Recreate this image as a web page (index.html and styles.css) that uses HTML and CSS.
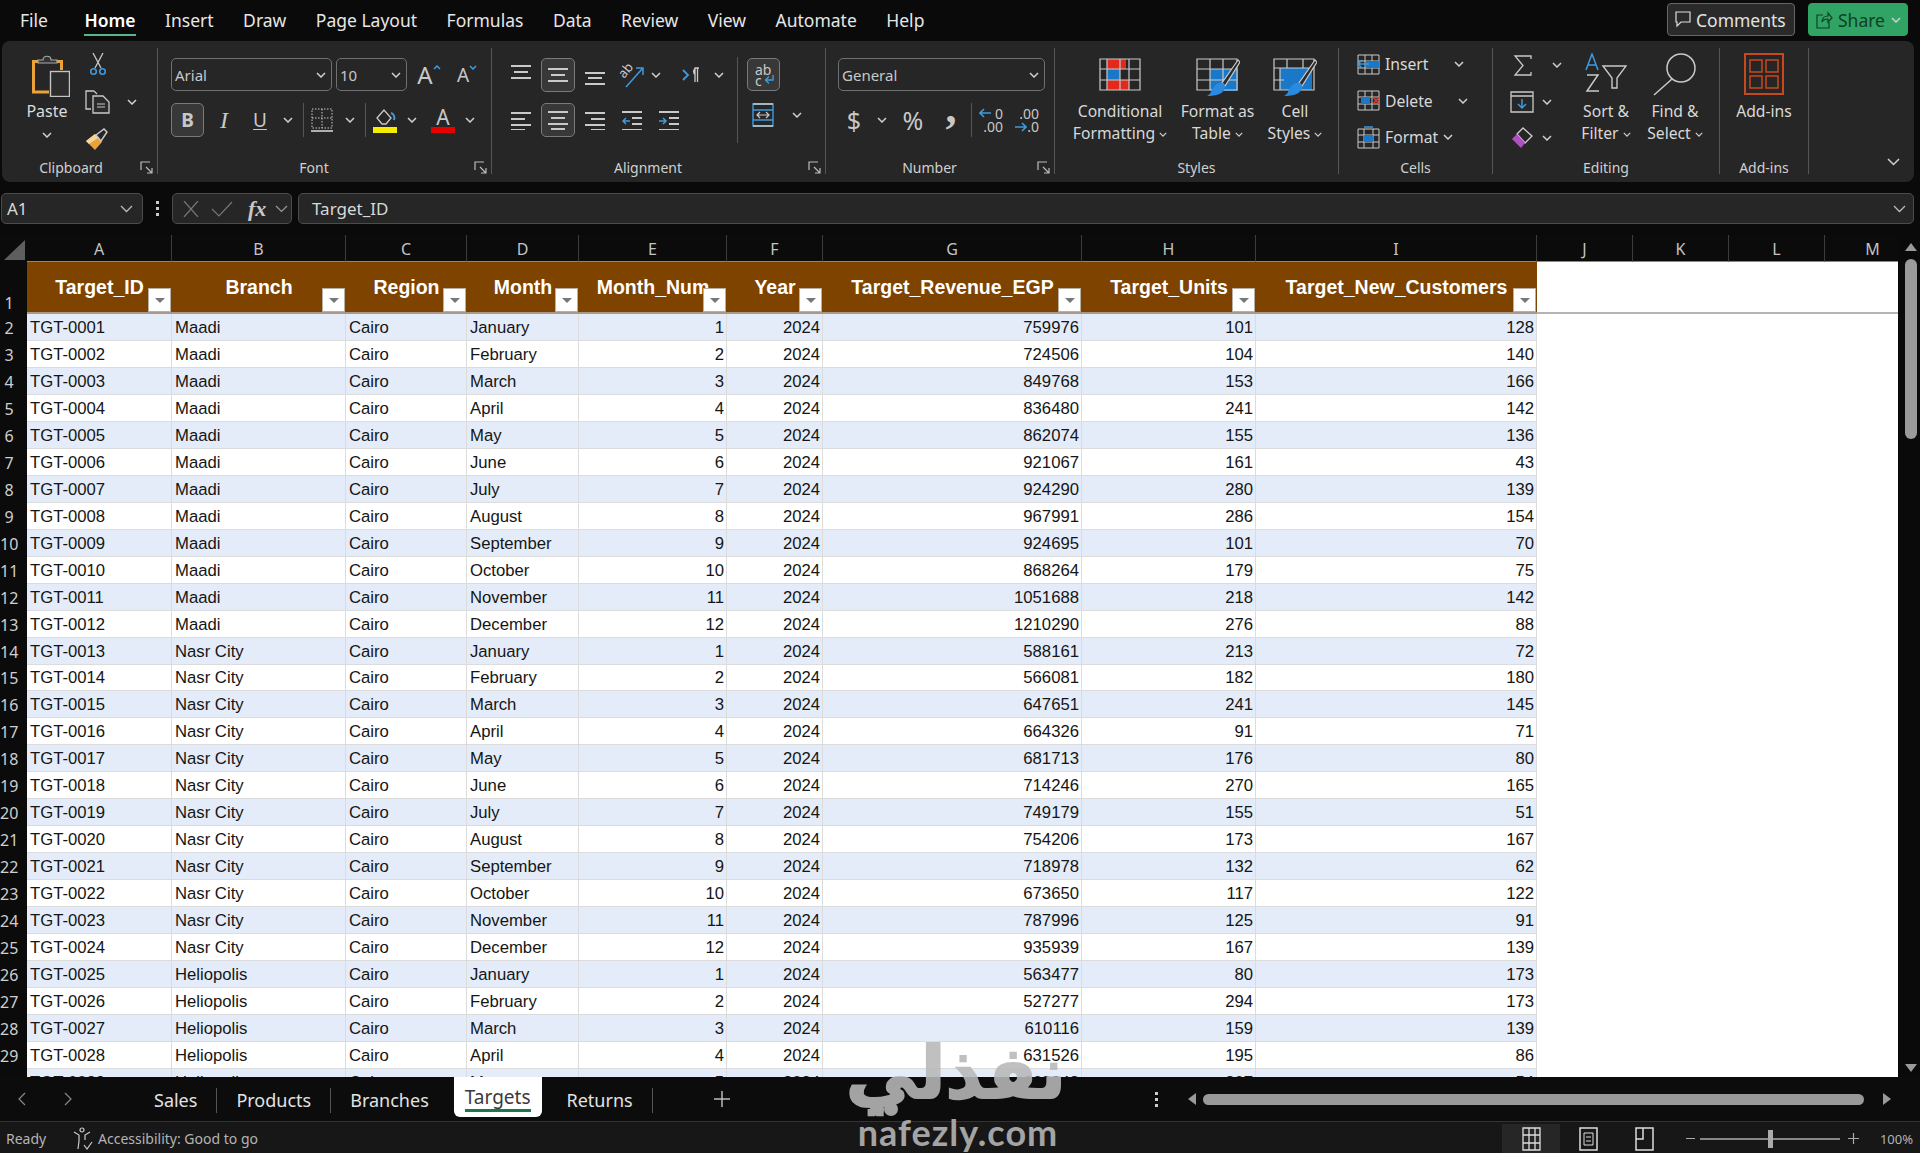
FILE: index.html
```html
<!DOCTYPE html>
<html lang="en">
<head>
    <meta charset="UTF-8">
    <meta name="viewport" content="width=device-width, initial-scale=1.0">
    <title>Targets - Excel</title>
    <link rel="stylesheet" href="styles.css">
</head>
<body>
    <svg class="defs" aria-hidden="true">
        <symbol id="chev" viewBox="0 0 10 6"><path d="M1 1l4 4 4-4" fill="none" stroke="#d0d0d0" stroke-width="1.5"/></symbol>
        <symbol id="launch" viewBox="0 0 13 13"><path d="M1 9V1h9M6 6l6 6M12 7v5H7" fill="none" stroke="#bcbcbc" stroke-width="1.2"/></symbol>
    </svg>

    <!-- menu bar -->
    <header class="topbar">
        <nav class="menu">
            <span class="file">File</span><span class="active">Home</span><span>Insert</span><span>Draw</span><span>Page Layout</span><span>Formulas</span><span>Data</span><span>Review</span><span>View</span><span>Automate</span><span>Help</span>
        </nav>
        <div class="top-actions">
            <button class="btn-comments">
                <svg width="16" height="17" viewBox="0 0 16 17"><path d="M1 1h14v10H6l-4 4v-4H1z" fill="none" stroke="#ddd" stroke-width="1.2"/></svg>
                Comments
            </button>
            <button class="btn-share">
                <svg width="17" height="18" viewBox="0 0 17 18"><path d="M7 4H1v13h12v-6M6 11c0-4 3-6 6-6V2l4 5-4 4V8c-3 0-5 1-6 3z" fill="none" stroke="#103f26" stroke-width="1.2"/></svg>
                Share
                <svg class="chev"><use href="#chev"/></svg>
            </button>
        </div>
    </header>

    <!-- ribbon -->
    <section class="ribbon">
        <div class="group g-clipboard">
            <div class="body clip-body">
                <div class="paste">
                    <svg class="paste-ic" width="38" height="43" viewBox="0 0 38 43"><path d="M8 7.5H1.500V38H17M23 7.500h6.500V16" fill="none" stroke="#eaa23a" stroke-width="3"/><path d="M6 9V6h5c0-5 8-5 8 0h6v3z" fill="#333" stroke="#aaa" stroke-width="1.200"/><rect x="18.500" y="17.500" width="19" height="25" fill="#2c2c2c" stroke="#c4c4c4" stroke-width="1.400"/></svg>
                    <span>Paste</span>
                    <svg class="chev"><use href="#chev"/></svg>
                </div>
                <div class="clip-tools">
                    <svg width="16" height="23" viewBox="0 0 16 23"><path d="M3 0l8 15M13 0L5 15" fill="none" stroke="#c9c9c9" stroke-width="1.300"/><circle cx="3.500" cy="18.500" r="2.800" fill="none" stroke="#3f9ade" stroke-width="1.600"/><circle cx="12.500" cy="18.500" r="2.800" fill="none" stroke="#3f9ade" stroke-width="1.600"/></svg>
                    <div class="copy-row">
                        <svg width="25" height="24" viewBox="0 0 25 24"><path d="M9 1H1v18h5M9 1l3 3" fill="none" stroke="#c9c9c9" stroke-width="1.300"/><path d="M8 6h10l6 6v11H8z" fill="#2b2b2b" stroke="#c9c9c9" stroke-width="1.300"/><path d="M12 14h8M12 17h8" stroke="#c9c9c9"/></svg>
                        <svg class="chev"><use href="#chev"/></svg>
                    </div>
                    <svg width="23" height="23" viewBox="0 0 23 23"><path d="M1 13l9-7 7 8-7 8z" fill="#eaa23a"/><path d="M1 13l9-7 3 4-9 6z" fill="#f3d79b"/><path d="M11 7l8-6 3 3-6 9z" fill="none" stroke="#c9c9c9" stroke-width="1.500"/></svg>
                </div>
            </div>
            <div class="foot"><span>Clipboard</span><svg class="launch"><use href="#launch"/></svg></div>
        </div>

        <div class="group g-font">
            <div class="body rows">
                <div class="font-row1">
                    <div class="select"><span>Arial</span><svg class="chev"><use href="#chev"/></svg></div>
                    <div class="select size"><span>10</span><svg class="chev"><use href="#chev"/></svg></div>
                    <div class="grow">A<svg width="8" height="5" viewBox="0 0 8 5"><path d="M1 4l3-3 3 3" fill="none" stroke="#3f9ade" stroke-width="1.500"/></svg></div>
                    <div class="grow small">A<svg width="8" height="5" viewBox="0 0 8 5"><path d="M1 1l3 3 3-3" fill="none" stroke="#3f9ade" stroke-width="1.500"/></svg></div>
                </div>
                <div class="font-row2">
                    <div class="tbtn on bold">B</div>
                    <div class="glyph ital">I</div>
                    <div class="glyph under">U</div>
                    <svg class="chev"><use href="#chev"/></svg>
                    <i class="vsep"></i>
                    <svg width="22" height="24" viewBox="0 0 22 24"><path d="M1 1h20v19H1zM11 1v19M1 10h20" fill="none" stroke="#c9c9c9" stroke-dasharray="1.500 1.500"/><path d="M0 23h22" stroke="#ddd" stroke-width="1.500"/></svg>
                    <svg class="chev"><use href="#chev"/></svg>
                    <i class="vsep"></i>
                    <svg width="24" height="26" viewBox="0 0 24 26"><path d="M4 11l7-8 7 8-5 6H9z" fill="none" stroke="#c9c9c9" stroke-width="1.300"/><path d="M18 6c3 1 4 4 3 7" fill="none" stroke="#3f9ade" stroke-width="2"/><rect y="20" width="24" height="6" fill="#f5ec00"/></svg>
                    <svg class="chev"><use href="#chev"/></svg>
                    <div class="color-a">A</div>
                    <svg class="chev"><use href="#chev"/></svg>
                </div>
            </div>
            <div class="foot"><span>Font</span><svg class="launch"><use href="#launch"/></svg></div>
        </div>

        <div class="group g-align">
            <div class="body align-body">
                <div class="rows align-left">
                    <div class="align-row1">
                        <svg class="lines" viewBox="0 0 20 20"><path d="M0 3h20M3 9h14M0 15h20" transform="translate(0 -2)"/></svg>
                        <div class="tbtn on"><svg class="lines" viewBox="0 0 20 20"><path d="M0 4h20M3 10h14M0 16h20"/></svg></div>
                        <svg class="lines" viewBox="0 0 20 20"><path d="M0 8h20M3 13h14M0 19h20"/></svg>
                        <svg class="orient" width="24" height="26" viewBox="0 0 24 26"><path d="M6 25L22 7M16 6h7v7" fill="none" stroke="#3f9ade" stroke-width="1.500"/><text class="ab" transform="translate(4 17) rotate(-50)">ab</text></svg>
                        <svg class="chev"><use href="#chev"/></svg>
                        <span></span>
                        <svg width="18" height="16" viewBox="0 0 18 16"><path d="M1 3l5 5-5 5" fill="none" stroke="#3f9ade" stroke-width="1.800"/><path d="M13 15V1h4M15.500 1v14" fill="none" stroke="#c9c9c9" stroke-width="1.300"/><path d="M13 1a4 4 0 0 0 0 7z" fill="#c9c9c9"/></svg>
                        <svg class="chev"><use href="#chev"/></svg>
                    </div>
                    <div class="align-row2">
                        <svg class="lines" viewBox="0 0 20 20"><path d="M0 3h20M0 9h14M0 15h20M0 20h14"/></svg>
                        <div class="tbtn on"><svg class="lines" viewBox="0 0 20 20"><path d="M0 2h20M3 8h14M0 14h20M3 19h14"/></svg></div>
                        <svg class="lines" viewBox="0 0 20 20"><path d="M0 3h20M6 9h14M0 15h20M6 20h14"/></svg>
                        <svg class="lines" viewBox="0 0 20 20"><path d="M0 2h20M10 8h10M10 14h10M0 20h20"/><path class="blue" d="M8 11H1M4 8l-3 3 3 3"/></svg>
                        <svg class="lines" viewBox="0 0 20 20"><path d="M0 2h20M10 8h10M10 14h10M0 20h20"/><path class="blue" d="M0 11h7M4 8l3 3-3 3"/></svg>
                    </div>
                </div>
                <i class="vsep tall"></i>
                <div class="rows align-right">
                    <div class="tbtn on wrap"><span>ab<br>c</span><svg width="11" height="10" viewBox="0 0 11 10"><path d="M9 1v5H2M5 2.500L1.500 6 5 9.500" fill="none" stroke="#3f9ade" stroke-width="1.400"/></svg></div>
                    <div class="merge-row">
                        <svg width="22" height="24" viewBox="0 0 22 24"><path d="M1 1h20v22H1zM1 7h20M1 17h20" fill="none" stroke="#3f9ade" stroke-width="1.400"/><path d="M1 1h20M1 23h20" stroke="#c9c9c9" stroke-width="1.400"/><path d="M5 12h12M8 9l-3 3 3 3M14 9l3 3-3 3" fill="none" stroke="#c9c9c9" stroke-width="1.200"/></svg>
                        <svg class="chev"><use href="#chev"/></svg>
                    </div>
                </div>
            </div>
            <div class="foot"><span>Alignment</span><svg class="launch"><use href="#launch"/></svg></div>
        </div>

        <div class="group g-number">
            <div class="body rows">
                <div class="select number"><span>General</span><svg class="chev"><use href="#chev"/></svg></div>
                <div class="number-row">
                    <div class="glyph big">$</div>
                    <svg class="chev"><use href="#chev"/></svg>
                    <div class="glyph big">%</div>
                    <div class="glyph comma">,</div>
                    <i class="vsep"></i>
                    <div class="decimals"><svg width="12" height="10" viewBox="0 0 12 10"><path d="M12 5H1M5 1L1 5l4 4" fill="none" stroke="#3f9ade" stroke-width="1.600"/></svg><span class="d1">0</span><span class="d2">.00</span></div>
                    <div class="decimals"><span class="d1">.00</span><svg width="12" height="10" viewBox="0 0 12 10"><path d="M0 5h11M7 1l4 4-4 4" fill="none" stroke="#3f9ade" stroke-width="1.600"/></svg><span class="d2">.0</span></div>
                </div>
            </div>
            <div class="foot"><span>Number</span><svg class="launch"><use href="#launch"/></svg></div>
        </div>

        <div class="group g-styles">
            <div class="body bigs">
                <div class="big-btn w-cond">
                    <div class="big-ic"><svg width="42" height="33" viewBox="0 0 42 33"><path d="M8 1h19v10H8zM8 22h22v10H8z" fill="#e3281c"/><rect x="8" y="11" width="13" height="11" fill="#1a78c8"/><path d="M1 1h40v31H1zM1 11h40M1 22h40M8 1v31M21 1v31M30 1v31" fill="none" stroke="#c9c9c9" stroke-width="1.200"/></svg></div>
                    <div class="big-label">Conditional<br>Formatting <svg class="chev"><use href="#chev"/></svg></div>
                </div>
                <div class="big-btn w-table">
                    <div class="big-ic"><svg width="44" height="40" viewBox="0 0 44 40"><rect x="14" y="11" width="28" height="22" fill="#1a78c8"/><path d="M1 1h40v31H1zM1 11h40M1 22h40M14 1v31M27 1v31" fill="none" stroke="#c9c9c9" stroke-width="1.200"/><path d="M42 2L26 25l3 3L44 4z" fill="#2b2b2b" stroke="#c9c9c9" stroke-width="1.200"/><path d="M24 25c3-1 6 2 5 5-2 6-8 8-18 8 4-2 4-5 6-8 2-3 4-5 7-5z" fill="#2a8adf"/></svg></div>
                    <div class="big-label">Format as<br>Table <svg class="chev"><use href="#chev"/></svg></div>
                </div>
                <div class="big-btn w-cell">
                    <div class="big-ic"><svg width="44" height="40" viewBox="0 0 44 40"><rect x="7" y="10" width="32" height="22" fill="#1a78c8"/><path d="M1 1h40v31H1zM1 10h40M1 22h10M7 10v22M30 1v9M14 1v9" fill="none" stroke="#c9c9c9" stroke-width="1.200"/><path d="M42 2L26 25l3 3L44 4z" fill="#2b2b2b" stroke="#c9c9c9" stroke-width="1.200"/><path d="M24 25c3-1 6 2 5 5-2 6-8 8-18 8 4-2 4-5 6-8 2-3 4-5 7-5z" fill="#2a8adf"/></svg></div>
                    <div class="big-label">Cell<br>Styles <svg class="chev"><use href="#chev"/></svg></div>
                </div>
            </div>
            <div class="foot plain"><span>Styles</span></div>
        </div>

        <div class="group g-cells">
            <div class="body stack">
                <div class="cell-row">
                    <svg width="23" height="21" viewBox="0 0 23 21"><path d="M1 1h21v19H1zM1 7h21M1 14h21M8 1v19M15 1v19" fill="none" stroke="#c9c9c9"/><rect x="9" y="7" width="13" height="7" fill="#1a78c8"/><path d="M12 10H1M5 6l-4 4 4 4" fill="none" stroke="#3f9ade" stroke-width="1.600"/></svg>
                    <span>Insert</span><svg class="chev"><use href="#chev"/></svg>
                </div>
                <div class="cell-row">
                    <svg width="23" height="21" viewBox="0 0 23 21"><path d="M1 1h21v19H1zM1 7h21M1 14h21M8 1v19M15 1v19" fill="none" stroke="#c9c9c9"/><rect x="4" y="7" width="9" height="7" fill="#1a78c8"/><path d="M16 7l6 7M22 7l-6 7" stroke="#e3382c" stroke-width="1.600"/></svg>
                    <span>Delete</span><svg class="chev"><use href="#chev"/></svg>
                </div>
                <div class="cell-row tight">
                    <svg width="23" height="23" viewBox="0 0 23 23"><path d="M1 3h21v19H1zM1 9h21M1 16h21M7 3v19M16 3v19" fill="none" stroke="#c9c9c9"/><rect x="7" y="9" width="9" height="7" fill="#1a78c8"/><path d="M7 1h9" stroke="#3f9ade" stroke-width="1.500"/></svg>
                    <span>Format</span><svg class="chev"><use href="#chev"/></svg>
                </div>
            </div>
            <div class="foot plain"><span>Cells</span></div>
        </div>

        <div class="group g-editing">
            <div class="body edit-body">
                <div class="stack edit-tools">
                    <div class="edit-row sum">
                        <svg width="20" height="21" viewBox="0 0 20 21"><path d="M18 4V1H2l8 9.500L2 20h16v-3" fill="none" stroke="#c9c9c9" stroke-width="1.300"/></svg>
                        <svg class="chev"><use href="#chev"/></svg>
                    </div>
                    <div class="edit-row">
                        <svg width="24" height="22" viewBox="0 0 24 22"><path d="M1 1h22v20H1zM1 5h22" fill="none" stroke="#c9c9c9" stroke-width="1.300"/><path d="M12 8v9M8 13l4 4 4-4" fill="none" stroke="#3f9ade" stroke-width="1.500"/></svg>
                        <svg class="chev"><use href="#chev"/></svg>
                    </div>
                    <div class="edit-row">
                        <svg width="24" height="22" viewBox="0 0 24 22"><path d="M13 1l9 8-7 7-8-9z" fill="none" stroke="#d0d0d0" stroke-width="1.300"/><path d="M7 7l8 9-4 5-9-9z" fill="#b04fc4"/></svg>
                        <svg class="chev"><use href="#chev"/></svg>
                    </div>
                </div>
                <div class="big-btn w-sort">
                    <div class="big-ic"><svg width="42" height="40" viewBox="0 0 42 40"><path d="M1 17L7 1l6 16M3 12h8" fill="none" stroke="#3f9ade" stroke-width="1.500"/><path d="M2 22h11L2 38h12" fill="none" stroke="#c9c9c9" stroke-width="1.500"/><path d="M18 13h23l-9 12v10h-5V25z" fill="none" stroke="#c9c9c9" stroke-width="1.400"/></svg></div>
                    <div class="big-label">Sort &amp;<br>Filter <svg class="chev"><use href="#chev"/></svg></div>
                </div>
                <div class="big-btn w-find">
                    <div class="big-ic"><svg width="44" height="43" viewBox="0 0 44 43"><circle cx="28" cy="15" r="14" fill="none" stroke="#c9c9c9" stroke-width="1.500"/><path d="M19 26L1 42" stroke="#c9c9c9" stroke-width="1.500"/></svg></div>
                    <div class="big-label">Find &amp;<br>Select <svg class="chev"><use href="#chev"/></svg></div>
                </div>
            </div>
            <div class="foot plain"><span>Editing</span></div>
        </div>

        <div class="group g-addins">
            <div class="body bigs">
                <div class="big-btn w-add">
                    <div class="big-ic"><svg width="40" height="42" viewBox="0 0 40 42"><rect x="1" y="1" width="38" height="40" fill="none" stroke="#c8481e" stroke-width="2"/><path d="M6 7h12v12H6zM22 7h12v12H22zM6 23h12v12H6zM22 23h12v12H22z" fill="none" stroke="#c8481e" stroke-width="1.500"/></svg></div>
                    <div class="big-label">Add-ins</div>
                </div>
            </div>
            <div class="foot plain"><span>Add-ins</span></div>
        </div>

        <div class="collapse"><svg width="13" height="8" viewBox="0 0 13 8"><path d="M1 1l5.500 5.500L12 1" fill="none" stroke="#d0d0d0" stroke-width="1.500"/></svg></div>
    </section>

    <!-- formula bar -->
    <section class="formula">
        <div class="namebox"><span>A1</span><svg width="13" height="8" viewBox="0 0 13 8"><path d="M1 1l5.500 5.500L12 1" fill="none" stroke="#bbb" stroke-width="1.300"/></svg></div>
        <div class="fdots"><i></i><i></i><i></i></div>
        <div class="fbtns">
            <svg width="18" height="16" viewBox="0 0 18 16"><path d="M2 0l14 16M16 0L2 16" stroke="#777" stroke-width="1.200"/></svg>
            <svg width="22" height="16" viewBox="0 0 22 16"><path d="M1 8l7 7L21 1" fill="none" stroke="#777" stroke-width="1.200"/></svg>
            <span class="fx">fx</span>
            <svg width="13" height="8" viewBox="0 0 13 8"><path d="M1 1l5.500 5.500L12 1" fill="none" stroke="#999" stroke-width="1.200"/></svg>
        </div>
        <div class="finput"><span>Target_ID</span><svg width="13" height="8" viewBox="0 0 13 8"><path d="M1 1l5.500 5.500L12 1" fill="none" stroke="#bbb" stroke-width="1.300"/></svg></div>
    </section>

    <!-- sheet -->
    <main class="sheet">
        <div class="grid-wrap">
            <table class="grid">
                <colgroup>
                    <col class="c-row"><col class="c-a"><col class="c-b"><col class="c-c"><col class="c-d"><col class="c-e"><col class="c-f"><col class="c-g"><col class="c-h"><col class="c-i"><col class="c-x"><col class="c-x"><col class="c-x"><col class="c-x">
                </colgroup>
                <tr class="col-heads">
                    <th class="corner"><i></i></th><th>A</th><th>B</th><th>C</th><th>D</th><th>E</th><th>F</th><th>G</th><th>H</th><th>I</th><th>J</th><th>K</th><th>L</th><th>M</th>
                </tr>
                <tr class="head">
                    <th class="rn first">1</th>
                    <th>Target_ID<b></b></th><th>Branch<b></b></th><th>Region<b></b></th><th>Month<b></b></th><th>Month_Num<b></b></th><th>Year<b></b></th><th>Target_Revenue_EGP<b></b></th><th>Target_Units<b></b></th><th>Target_New_Customers<b></b></th>
                    <td class="rest-top" colspan="4"></td>
                </tr>
                <tr><th class="rn">2</th><td>TGT-0001</td><td>Maadi</td><td>Cairo</td><td>January</td><td class="n">1</td><td class="n">2024</td><td class="n">759976</td><td class="n">101</td><td class="n">128</td><td class="rest" colspan="4" rowspan="29"></td></tr>
                <tr><th class="rn">3</th><td>TGT-0002</td><td>Maadi</td><td>Cairo</td><td>February</td><td class="n">2</td><td class="n">2024</td><td class="n">724506</td><td class="n">104</td><td class="n">140</td></tr>
                <tr><th class="rn">4</th><td>TGT-0003</td><td>Maadi</td><td>Cairo</td><td>March</td><td class="n">3</td><td class="n">2024</td><td class="n">849768</td><td class="n">153</td><td class="n">166</td></tr>
                <tr><th class="rn">5</th><td>TGT-0004</td><td>Maadi</td><td>Cairo</td><td>April</td><td class="n">4</td><td class="n">2024</td><td class="n">836480</td><td class="n">241</td><td class="n">142</td></tr>
                <tr><th class="rn">6</th><td>TGT-0005</td><td>Maadi</td><td>Cairo</td><td>May</td><td class="n">5</td><td class="n">2024</td><td class="n">862074</td><td class="n">155</td><td class="n">136</td></tr>
                <tr><th class="rn">7</th><td>TGT-0006</td><td>Maadi</td><td>Cairo</td><td>June</td><td class="n">6</td><td class="n">2024</td><td class="n">921067</td><td class="n">161</td><td class="n">43</td></tr>
                <tr><th class="rn">8</th><td>TGT-0007</td><td>Maadi</td><td>Cairo</td><td>July</td><td class="n">7</td><td class="n">2024</td><td class="n">924290</td><td class="n">280</td><td class="n">139</td></tr>
                <tr><th class="rn">9</th><td>TGT-0008</td><td>Maadi</td><td>Cairo</td><td>August</td><td class="n">8</td><td class="n">2024</td><td class="n">967991</td><td class="n">286</td><td class="n">154</td></tr>
                <tr><th class="rn">10</th><td>TGT-0009</td><td>Maadi</td><td>Cairo</td><td>September</td><td class="n">9</td><td class="n">2024</td><td class="n">924695</td><td class="n">101</td><td class="n">70</td></tr>
                <tr><th class="rn">11</th><td>TGT-0010</td><td>Maadi</td><td>Cairo</td><td>October</td><td class="n">10</td><td class="n">2024</td><td class="n">868264</td><td class="n">179</td><td class="n">75</td></tr>
                <tr><th class="rn">12</th><td>TGT-0011</td><td>Maadi</td><td>Cairo</td><td>November</td><td class="n">11</td><td class="n">2024</td><td class="n">1051688</td><td class="n">218</td><td class="n">142</td></tr>
                <tr><th class="rn">13</th><td>TGT-0012</td><td>Maadi</td><td>Cairo</td><td>December</td><td class="n">12</td><td class="n">2024</td><td class="n">1210290</td><td class="n">276</td><td class="n">88</td></tr>
                <tr><th class="rn">14</th><td>TGT-0013</td><td>Nasr City</td><td>Cairo</td><td>January</td><td class="n">1</td><td class="n">2024</td><td class="n">588161</td><td class="n">213</td><td class="n">72</td></tr>
                <tr><th class="rn">15</th><td>TGT-0014</td><td>Nasr City</td><td>Cairo</td><td>February</td><td class="n">2</td><td class="n">2024</td><td class="n">566081</td><td class="n">182</td><td class="n">180</td></tr>
                <tr><th class="rn">16</th><td>TGT-0015</td><td>Nasr City</td><td>Cairo</td><td>March</td><td class="n">3</td><td class="n">2024</td><td class="n">647651</td><td class="n">241</td><td class="n">145</td></tr>
                <tr><th class="rn">17</th><td>TGT-0016</td><td>Nasr City</td><td>Cairo</td><td>April</td><td class="n">4</td><td class="n">2024</td><td class="n">664326</td><td class="n">91</td><td class="n">71</td></tr>
                <tr><th class="rn">18</th><td>TGT-0017</td><td>Nasr City</td><td>Cairo</td><td>May</td><td class="n">5</td><td class="n">2024</td><td class="n">681713</td><td class="n">176</td><td class="n">80</td></tr>
                <tr><th class="rn">19</th><td>TGT-0018</td><td>Nasr City</td><td>Cairo</td><td>June</td><td class="n">6</td><td class="n">2024</td><td class="n">714246</td><td class="n">270</td><td class="n">165</td></tr>
                <tr><th class="rn">20</th><td>TGT-0019</td><td>Nasr City</td><td>Cairo</td><td>July</td><td class="n">7</td><td class="n">2024</td><td class="n">749179</td><td class="n">155</td><td class="n">51</td></tr>
                <tr><th class="rn">21</th><td>TGT-0020</td><td>Nasr City</td><td>Cairo</td><td>August</td><td class="n">8</td><td class="n">2024</td><td class="n">754206</td><td class="n">173</td><td class="n">167</td></tr>
                <tr><th class="rn">22</th><td>TGT-0021</td><td>Nasr City</td><td>Cairo</td><td>September</td><td class="n">9</td><td class="n">2024</td><td class="n">718978</td><td class="n">132</td><td class="n">62</td></tr>
                <tr><th class="rn">23</th><td>TGT-0022</td><td>Nasr City</td><td>Cairo</td><td>October</td><td class="n">10</td><td class="n">2024</td><td class="n">673650</td><td class="n">117</td><td class="n">122</td></tr>
                <tr><th class="rn">24</th><td>TGT-0023</td><td>Nasr City</td><td>Cairo</td><td>November</td><td class="n">11</td><td class="n">2024</td><td class="n">787996</td><td class="n">125</td><td class="n">91</td></tr>
                <tr><th class="rn">25</th><td>TGT-0024</td><td>Nasr City</td><td>Cairo</td><td>December</td><td class="n">12</td><td class="n">2024</td><td class="n">935939</td><td class="n">167</td><td class="n">139</td></tr>
                <tr><th class="rn">26</th><td>TGT-0025</td><td>Heliopolis</td><td>Cairo</td><td>January</td><td class="n">1</td><td class="n">2024</td><td class="n">563477</td><td class="n">80</td><td class="n">173</td></tr>
                <tr><th class="rn">27</th><td>TGT-0026</td><td>Heliopolis</td><td>Cairo</td><td>February</td><td class="n">2</td><td class="n">2024</td><td class="n">527277</td><td class="n">294</td><td class="n">173</td></tr>
                <tr><th class="rn">28</th><td>TGT-0027</td><td>Heliopolis</td><td>Cairo</td><td>March</td><td class="n">3</td><td class="n">2024</td><td class="n">610116</td><td class="n">159</td><td class="n">139</td></tr>
                <tr><th class="rn">29</th><td>TGT-0028</td><td>Heliopolis</td><td>Cairo</td><td>April</td><td class="n">4</td><td class="n">2024</td><td class="n">631526</td><td class="n">195</td><td class="n">86</td></tr>
                <tr><th class="rn">30</th><td>TGT-0029</td><td>Heliopolis</td><td>Cairo</td><td>May</td><td class="n">5</td><td class="n">2024</td><td class="n">668048</td><td class="n">207</td><td class="n">54</td></tr>
            </table>
        </div>
        <div class="vscroll">
            <i class="arrow up"></i>
            <div class="vthumb"></div>
            <i class="arrow down"></i>
        </div>
    </main>

    <!-- sheet tabs -->
    <section class="tabsbar">
        <div class="tab-nav">
            <svg width="8" height="14" viewBox="0 0 8 14"><path d="M7 1L1 7l6 6" fill="none" stroke="#888" stroke-width="1.200"/></svg>
            <svg width="8" height="14" viewBox="0 0 8 14"><path d="M1 1l6 6-6 6" fill="none" stroke="#888" stroke-width="1.200"/></svg>
        </div>
        <div class="tabs">
            <span class="tab">Sales</span>
            <span class="tab">Products</span>
            <span class="tab">Branches</span>
            <span class="tab current">Targets</span>
            <span class="tab">Returns</span>
        </div>
        <svg class="plus" width="16" height="16" viewBox="0 0 16 16"><path d="M8 0v16M0 8h16" stroke="#bbb" stroke-width="1.500"/></svg>
        <div class="tab-dots"><i></i><i></i><i></i></div>
        <div class="hscroll">
            <i class="arrow left"></i>
            <div class="hthumb"></div>
            <i class="arrow right"></i>
        </div>
    </section>

    <!-- status bar -->
    <footer class="status">
        <span class="ready">Ready</span>
        <svg class="acc" width="20" height="24" viewBox="0 0 20 24"><circle cx="9" cy="3" r="2" fill="none" stroke="#ccc" stroke-width="1.200"/><path d="M1 5l5 3v6l-1 8M17 5l-5 3v5M11 18l3 4 5-7" fill="none" stroke="#ccc" stroke-width="1.200"/></svg>
        <span class="acc-text">Accessibility: Good to go</span>
        <div class="views">
            <div class="view on"><svg width="19" height="24" viewBox="0 0 19 24"><path d="M1 1h17v22H1zM1 8h17M1 16h17M7 1v22M13 1v22" fill="none" stroke="#ddd" stroke-width="1.300"/></svg></div>
            <div class="view"><svg width="19" height="24" viewBox="0 0 19 24"><path d="M1 1h17v22H1z" fill="none" stroke="#ddd" stroke-width="1.500"/><path d="M5 6h9v12H5zM7 10h5M7 14h5" fill="none" stroke="#ddd"/></svg></div>
            <div class="view"><svg width="19" height="24" viewBox="0 0 19 24"><path d="M1 1h17v22H1zM8 1v11H1" fill="none" stroke="#ddd" stroke-width="1.500"/></svg></div>
        </div>
        <div class="zoom">
            <i class="z-minus"></i>
            <div class="z-track"><i></i></div>
            <svg width="11" height="11" viewBox="0 0 11 11"><path d="M5.500 0v11M0 5.500h11" stroke="#aaa" stroke-width="1.200"/></svg>
            <span>100%</span>
        </div>
    </footer>

    <!-- watermark -->
    <div class="watermark">
        <div class="wm-ar" lang="ar" dir="rtl">نفذلي</div>
        <div class="wm-dots"><i></i><i></i></div>
        <div class="wm-en">nafezly.com</div>
    </div>
</body>
</html>
```

FILE: styles.css
```css
* {
    box-sizing: border-box;
}
html, body {
    margin: 0;
    height: 100%;
}
body {
    position: relative;
    width: 1920px;
    height: 1153px;
    overflow: hidden;
    display: flex;
    flex-direction: column;
    background-color: #0a0a0a;
    color: #dcdcdc;
    font-family: "Noto Sans", "Open Sans", sans-serif;
    font-size: 15px;
}
svg {
    display: block;
    flex: none;
}
i {
    font-style: normal;
}
.defs {
    position: absolute;
    width: 0;
    height: 0;
}
.chev {
    width: 10px;
    height: 6px;
}
.launch {
    width: 13px;
    height: 13px;
    margin-right: 4px;
}

/* menu bar */
.topbar {
    height: 41px;
    flex: none;
    display: flex;
    justify-content: space-between;
}
.menu {
    display: flex;
    gap: 29.500px;
    padding-left: 20px;
    font-size: 17.500px;
    line-height: 41px;
    color: #e6e6e6;
}
.menu .file {
    margin-right: 7px;
}
.menu .active {
    position: relative;
    font-weight: 600;
    color: #fff;
}
.menu .active::after {
    content: "";
    position: absolute;
    left: 0;
    right: 0;
    bottom: 5px;
    height: 2px;
    background-color: #5bb58a;
}
.top-actions {
    display: flex;
    gap: 13px;
    padding: 3px 12px 0 0;
}
.top-actions button {
    height: 33px;
    display: flex;
    align-items: center;
    gap: 5px;
    border-radius: 4px;
    font: inherit;
    font-size: 17.500px;
}
.btn-comments {
    width: 128px;
    padding: 0 0 0 7px;
    background-color: #2a2a2a;
    border: 1px solid #666;
    color: #e2e2e2;
}
.btn-share {
    width: 100px;
    padding: 0 0 0 7px;
    background-color: #2fa464;
    border: 1px solid #2fa464;
    color: #103f26;
}
.btn-share .chev {
    margin-left: 1px;
}

/* ribbon */
.ribbon {
    height: 141px;
    flex: none;
    margin: 0 6px 0 2px;
    padding: 7px 0 8px;
    display: flex;
    background-color: #262626;
    border-radius: 8px;
}
.group {
    flex: none;
    height: 126px;
    display: flex;
    flex-direction: column;
    border-right: 1px solid #565656;
}
.g-clipboard { width: 156px; }
.g-font { width: 334px; }
.g-align { width: 334px; }
.g-number { width: 229px; }
.g-styles { width: 284px; }
.g-cells { width: 154px; }
.g-editing { width: 227px; }
.g-addins { width: 89px; }
.body {
    flex: 1;
    min-height: 0;
}
.foot {
    height: 12px;
    margin-top: -1px;
    margin-bottom: 1px;
    display: flex;
    align-items: center;
    font-size: 14px;
    color: #d0d0d0;
}
.foot span {
    flex: 1;
    text-align: center;
    padding-right: 4px;
}
.g-clipboard .foot span {
    padding-right: 0;
}
.foot.plain span {
    padding-right: 0;
}
.rows {
    display: flex;
    flex-direction: column;
    gap: 12px;
    padding-top: 10px;
}
.vsep {
    width: 1px;
    height: 34px;
    background-color: #565656;
    justify-self: center;
}
.vsep.tall {
    flex: none;
    height: 86px;
    margin-top: 9px;
}
.select {
    height: 33px;
    display: flex;
    align-items: center;
    justify-content: space-between;
    padding: 0 5px 0 3px;
    border: 1px solid #707070;
    border-radius: 5px;
    font-size: 15px;
    color: #c8c8c8;
}
.tbtn {
    width: 34px;
    height: 34px;
    display: flex;
    align-items: center;
    justify-content: center;
}
.tbtn.on {
    background-color: #383838;
    border: 1px solid #7a7a7a;
    border-radius: 5px;
}
.glyph {
    font-size: 20px;
    color: #c8c8c8;
}
.lines {
    width: 20px;
    height: 20px;
    fill: none;
    stroke: #c9c9c9;
    stroke-width: 2;
}
.lines .blue {
    stroke: #3f9ade;
    stroke-width: 1.500;
}

/* clipboard */
.clip-body {
    display: flex;
    padding-left: 20px;
}
.paste {
    width: 50px;
    padding-top: 6px;
    display: flex;
    flex-direction: column;
    align-items: center;
}
.paste-ic {
    margin-left: 8px;
}
.paste span {
    margin-top: 2px;
    line-height: 24px;
    font-size: 16px;
}
.paste .chev {
    margin-top: 9px;
}
.clip-tools {
    margin-left: 13px;
    padding-top: 5px;
    display: flex;
    flex-direction: column;
    gap: 14px;
}
.clip-tools > svg:first-child {
    margin-left: 5px;
}
.copy-row {
    display: flex;
    align-items: center;
    gap: 17px;
}

/* font */
.g-font .rows {
    padding-left: 13px;
}
.font-row1 {
    display: grid;
    grid-template-columns: 165px 76px 34px 42px;
    align-items: center;
}
.font-row1 .select {
    width: 161px;
}
.font-row1 .select.size {
    width: 71px;
}
.grow {
    position: relative;
    justify-self: center;
    font-size: 24px;
    line-height: 28px;
    color: #c8c8c8;
    padding-right: 8px;
}
.grow.small {
    font-size: 19px;
}
.grow svg {
    position: absolute;
    top: 4px;
    right: 0;
}
.font-row2 {
    display: grid;
    grid-template-columns: 33px 40px 32px 24px 6px 32px 24px 6px 34px 20px 42px 12px;
    align-items: center;
    justify-items: center;
}
.bold {
    width: 33px;
    font-weight: 700;
    font-size: 19px;
    color: #c8c8c8;
}
.ital {
    font-family: "Liberation Serif", serif;
    font-style: italic;
    font-size: 24px;
}
.under {
    text-decoration: underline;
    text-underline-offset: 2px;
    font-size: 19px;
}
.color-a {
    width: 24px;
    height: 26px;
    text-align: center;
    font-size: 21px;
    line-height: 21px;
    color: #c8c8c8;
    border-bottom: 6px solid #e60000;
}

/* alignment */
.align-body {
    display: flex;
}
.align-left {
    width: 245px;
    padding-left: 9px;
}
.align-row1 {
    display: grid;
    grid-template-columns: 40px 34px 40px 34px 14px 7px 42px 14px;
    height: 33px;
    align-items: center;
    justify-items: center;
}
.align-row2 {
    display: grid;
    grid-template-columns: 40px 34px 40px 33px 41px;
    align-items: center;
    justify-items: center;
}
.orient {
    overflow: visible;
}
.ab {
    font-size: 13px;
    fill: #c9c9c9;
    stroke: none;
}
.align-right {
    padding-left: 9px;
}
.wrap {
    height: 33px;
    width: 33px;
    gap: 0;
    position: relative;
    font-size: 14px;
    line-height: 11px;
    color: #c8c8c8;
    justify-content: flex-start;
    padding-left: 7px;
}
.wrap svg {
    position: absolute;
    right: 4px;
    bottom: 6px;
}
.merge-row {
    display: flex;
    align-items: center;
    gap: 18px;
    padding-left: 5px;
}

/* number */
.g-number .rows {
    padding-left: 12px;
}
.select.number {
    width: 207px;
}
.number-row {
    display: grid;
    grid-template-columns: 32px 24px 38px 38px 2px 38px 34px;
    align-items: center;
    justify-items: center;
    height: 34px;
}
.glyph.big {
    font-size: 25px;
    line-height: 34px;
}
.comma {
    font-family: "Liberation Serif", serif;
    font-weight: 700;
    font-size: 44px;
    line-height: 34px;
    margin-top: -22px;
}
.decimals {
    position: relative;
    width: 24px;
    height: 26px;
    font-size: 14px;
    line-height: 13px;
    color: #c8c8c8;
}
.decimals span, .decimals svg {
    position: absolute;
}
.decimals .d1 {
    right: 0;
    top: 0;
}
.decimals .d2 {
    right: 0;
    top: 13px;
}
.decimals svg {
    left: 0;
    top: 1px;
}
.decimals .d1 + svg {
    top: 15px;
}

/* big buttons */
.bigs {
    display: flex;
    padding-top: 5px;
}
.g-styles .bigs {
    padding-left: 11px;
}
.big-btn {
    flex: none;
    text-align: center;
}
.big-ic {
    height: 47px;
    display: flex;
    justify-content: center;
    align-items: flex-start;
}
.big-label {
    font-size: 15.700px;
    line-height: 22px;
    color: #d8d8d8;
    white-space: nowrap;
}
.big-label .chev {
    display: inline-block;
    width: 8px;
    height: 5px;
    vertical-align: 2px;
}
.w-cond { width: 108px; }
.w-cond .big-ic { padding-top: 5px; }
.w-table { width: 87px; }
.w-table .big-ic { padding-top: 5px; }
.w-cell { width: 68px; }
.w-cell .big-ic { padding-top: 5px; }
.w-sort { width: 68px; }
.w-find { width: 70px; }
.w-add { width: 88px; }

/* cells + editing */
.stack {
    display: flex;
    flex-direction: column;
    gap: 14.500px;
    padding-top: 5px;
}
.g-cells .stack {
    padding-left: 18px;
}
.cell-row {
    height: 22px;
    display: flex;
    align-items: center;
    font-size: 15.700px;
    color: #d8d8d8;
}
.cell-row span {
    margin-left: 5px;
    margin-right: 25px;
}
.cell-row.tight span {
    margin-right: 5px;
}
.edit-body {
    display: flex;
    padding: 5px 0 0 17px;
}
.edit-tools {
    width: 62px;
    padding-top: 1px;
}
.edit-row {
    height: 22px;
    display: flex;
    align-items: center;
    gap: 8px;
}
.edit-row.sum {
    gap: 19px;
    padding-left: 3px;
}
.collapse {
    flex: 1;
    display: flex;
    justify-content: flex-end;
    align-items: flex-end;
    padding: 0 14px 8px 0;
}

/* formula bar */
.formula {
    height: 31px;
    flex: none;
    margin: 11px 6px 11px 1px;
    display: flex;
    font-size: 17px;
    color: #d8d8d8;
}
.namebox, .fbtns, .finput {
    display: flex;
    align-items: center;
    background-color: #262626;
    border: 1px solid #4c4c4c;
    border-radius: 5px;
}
.namebox {
    width: 142px;
    padding: 0 9px 0 5px;
    justify-content: space-between;
}
.fdots {
    width: 29px;
    display: flex;
    flex-direction: column;
    align-items: center;
    justify-content: center;
    gap: 3px;
}
.fdots i, .tab-dots i {
    width: 3px;
    height: 3px;
    background-color: #ccc;
}
.fbtns {
    width: 120px;
    padding-left: 9px;
    gap: 11px;
}
.fx {
    font-family: "Liberation Serif", serif;
    font-style: italic;
    font-weight: 700;
    font-size: 22px;
    line-height: 28px;
    color: #c8c8c8;
    margin-left: 4px;
}
.fbtns svg:last-child {
    margin-left: -2px;
}
.finput {
    flex: 1;
    margin-left: 6px;
    padding: 0 7px 0 13px;
    justify-content: space-between;
}

/* sheet */
.sheet {
    height: 842px;
    flex: none;
    display: flex;
    overflow: hidden;
}
.grid-wrap {
    width: 1898px;
    height: 842px;
    flex: none;
    overflow: hidden;
}
.grid {
    table-layout: fixed;
    width: 1921px;
    border-collapse: separate;
    border-spacing: 0;
    font-family: "Liberation Sans", Arial, sans-serif;
    font-size: 16.700px;
    color: #151515;
}
.c-row { width: 27px; }
.c-a { width: 145px; }
.c-b { width: 174px; }
.c-c { width: 121px; }
.c-d { width: 112px; }
.c-e { width: 148px; }
.c-f { width: 96px; }
.c-g { width: 259px; }
.c-h { width: 174px; }
.c-i { width: 281px; }
.c-x { width: 96px; }
.grid td, .grid th {
    padding: 0;
    overflow: hidden;
    white-space: nowrap;
}
.grid tr:nth-child(n+3) {
    height: 27px;
}
/* the rows are a hair under 27px in the capture */
.grid tr:nth-child(16) {
    height: 26px;
}
.grid td {
    padding: 1px 2px 0 3px;
    background-color: #fff;
    border-right: 1px solid #dcdcdc;
    border-bottom: 1px solid #dcdcdc;
}
.grid tr:nth-child(odd) td {
    background-color: #e4ecf9;
}
.grid td.n {
    text-align: right;
}
.col-heads {
    height: 27px;
}
.grid .col-heads th {
    padding-top: 2px;
    background-color: #0b0b0b;
    border-right: 1px solid #3c3c3c;
    border-bottom: 1px solid #8a8a78;
    font-family: "Noto Sans", sans-serif;
    font-size: 16px;
    font-weight: 400;
    color: #c4c4c4;
}
.grid .col-heads .corner {
    position: relative;
    border-right: 0;
    border-bottom: 0;
}
.corner i {
    position: absolute;
    right: 2px;
    bottom: 2px;
    width: 21px;
    height: 20px;
    background-color: #5e5e5e;
    clip-path: polygon(100% 0, 100% 100%, 0 100%);
}
.head {
    height: 52px;
}
.head th {
    position: relative;
    background-color: #7f4300;
    border-bottom: 2px solid #a89a88;
    font-size: 19.500px;
    font-weight: 700;
    color: #fff;
    text-align: center;
}
.head b {
    position: absolute;
    right: 1px;
    bottom: 0;
    width: 23px;
    height: 24px;
    background-color: #fff;
    border: 1px solid #b9b0a4;
}
.head b::after {
    content: "";
    position: absolute;
    left: 6px;
    top: 9px;
    border-style: solid;
    border-width: 5px 5px 0;
    border-color: #777 transparent transparent;
}
.grid .rn {
    background-color: #0b0b0b;
    border: 0;
    padding-right: 9px;
    font-family: "Noto Sans", sans-serif;
    font-size: 16px;
    font-weight: 400;
    color: #cfcfcf;
    text-align: center;
    overflow: visible;
}
.grid .rn.first {
    vertical-align: bottom;
}
.grid .head td.rest-top {
    background-color: #fff;
    border-right: 0;
    border-bottom: 2px solid #b4b4b4;
}
.grid tr td.rest {
    background-color: #fff;
    border: 0;
}
.vscroll {
    flex: 1;
    display: flex;
    flex-direction: column;
    align-items: center;
    padding: 8px 0 5px 4px;
}
.vthumb {
    width: 12px;
    height: 180px;
    margin-top: 8px;
    margin-bottom: auto;
    background-color: #9a9a9a;
    border-radius: 6px;
}
.arrow {
    display: block;
    width: 0;
    height: 0;
    border-style: solid;
}
.arrow.up {
    border-width: 0 6px 8px;
    border-color: transparent transparent #9a9a9a;
}
.arrow.down {
    border-width: 8px 6px 0;
    border-color: #9a9a9a transparent transparent;
}
.arrow.left {
    border-width: 6px 8px 6px 0;
    border-color: transparent #9a9a9a transparent transparent;
}
.arrow.right {
    border-width: 6px 0 6px 8px;
    border-color: transparent transparent transparent #9a9a9a;
    margin-left: 12px;
}

/* sheet tabs */
.tabsbar {
    height: 45px;
    flex: none;
    display: flex;
    align-items: center;
    border-bottom: 1px solid #333;
    background-color: #0c0c0c;
}
.tab-nav {
    width: 135px;
    padding-left: 18px;
    display: flex;
    gap: 38px;
}
.tabs {
    display: flex;
    height: 100%;
    font-size: 18px;
    color: #e2e2e2;
}
.tab {
    padding: 0 19px;
    margin-top: 11px;
    height: 25px;
    line-height: 24px;
    border-right: 1px solid #555;
}
.tab:nth-child(3) {
    border-right: 0;
    padding-right: 25px;
}
.tab.current {
    height: 40px;
    margin-top: 0;
    padding: 8px 11px 0;
    font-size: 19px;
    background-color: #fff;
    color: #3a3a3a;
    border-right: 0;
    border-radius: 0 0 6px 6px;
    position: relative;
}
.tab.current::after {
    content: "";
    position: absolute;
    left: 11px;
    right: 11px;
    bottom: 5px;
    height: 3px;
    background-color: #177a48;
}
.tab:nth-child(5) {
    margin-left: 6px;
}
.plus {
    margin-left: 61px;
}
.tab-dots {
    margin-left: 425px;
    width: 3px;
    display: flex;
    flex-direction: column;
    gap: 3px;
}
.hscroll {
    margin-left: 30px;
    display: flex;
    align-items: center;
    gap: 7px;
}
.hthumb {
    width: 661px;
    height: 11px;
    background-color: #999;
    border-radius: 6px;
}

/* status bar */
.status {
    flex: 1;
    display: flex;
    align-items: center;
    padding-top: 2px;
    background-color: #171717;
    font-size: 14px;
    color: #b4b4b4;
}
.ready {
    width: 73px;
    padding-left: 6px;
}
.acc-text {
    margin-left: 5px;
}
.views {
    margin-left: auto;
    display: flex;
    height: 100%;
}
.view {
    width: 56px;
    display: flex;
    align-items: center;
    justify-content: center;
}
.view.on {
    background-color: #262626;
    width: 58px;
}
.zoom {
    width: 248px;
    padding-left: 14px;
    display: flex;
    align-items: center;
    font-size: 13px;
}
.z-minus {
    width: 9px;
    height: 1px;
    background-color: #aaa;
}
.z-track {
    position: relative;
    width: 140px;
    height: 2px;
    margin: 0 8px 0 5px;
    background-color: #888;
}
.z-track i {
    position: absolute;
    left: 68px;
    top: -8px;
    width: 5px;
    height: 18px;
    background-color: #aaa;
}
.zoom span {
    margin-left: auto;
    padding-right: 7px;
}

/* watermark */
.watermark {
    position: absolute;
    left: 850px;
    top: 1033px;
    width: 216px;
    text-align: center;
    color: #b8b8b8;
    opacity: .88;
    pointer-events: none;
}
.wm-ar {
    font-family: "DejaVu Sans", sans-serif;
    font-weight: 700;
    font-size: 72px;
    line-height: 80px;
    -webkit-text-stroke: 2px #b8b8b8;
}
.wm-dots {
    margin-top: -11px;
    padding-left: 20px;
    height: 16px;
    display: flex;
}
.wm-dots i {
    width: 14px;
    height: 14px;
    border-radius: 50%;
    background-color: #b8b8b8;
}
.wm-en {
    margin-top: -3px;
    font-family: "Lato", sans-serif;
    font-weight: 700;
    font-size: 36px;
    letter-spacing: 1px;
    line-height: 34px;
}
```
